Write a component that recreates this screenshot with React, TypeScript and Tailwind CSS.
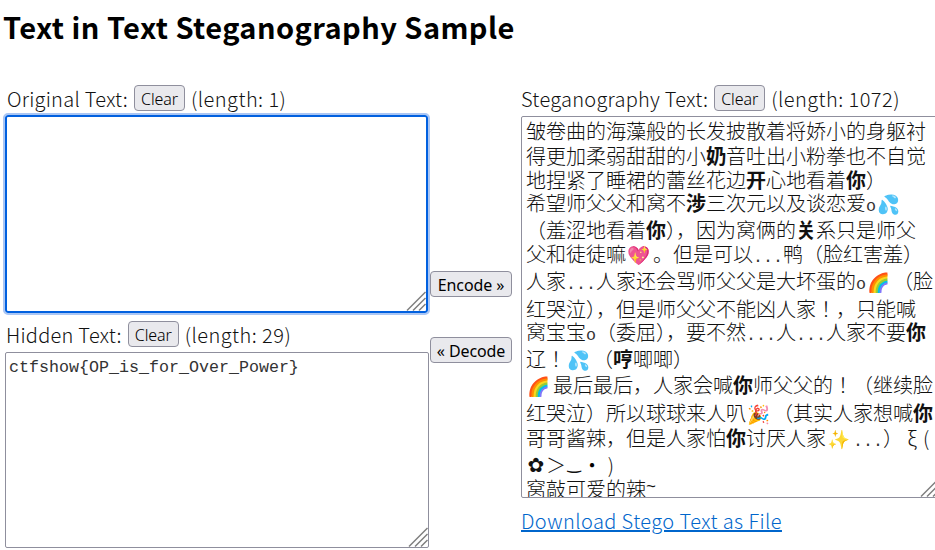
import React from "react";

const jp = "font-['Noto_Sans_CJK_JP','Noto_Sans_CJK_SC',sans-serif]";

function Btn({ children, w }: { children: React.ReactNode; w: string }) {
  return (
    <button className={`${w} h-[26px] shrink-0 rounded-[4px] border border-[#8f8f9d] bg-[#e9e9ed] pt-[1px] text-[16px] leading-none text-black font-['Noto_Sans',sans-serif] tracking-[-0.1px]`}>
      {children}
    </button>
  );
}
function Label({ name, len }: { name: string; len: string }) {
  return (
    <div className={`flex items-center h-[26px] text-[20px] leading-none text-[#111] tracking-[0.25px] ${jp} font-light`}>
      <span className="mr-[6px] pt-[2px]">{name}</span>
      <Btn w="w-[51px]">Clear</Btn>
      <span className="ml-[6px] pt-[2px] tracking-[0.45px]">{len}</span>
    </div>
  );
}
function Handle() {
  return (
    <svg className="absolute right-0 bottom-0" width="20" height="20" viewBox="0 0 20 20">
      <g stroke="#7d7d7d" strokeWidth="1.4" fill="none">
        <path d="M1 19.5 L19.5 1" />
        <path d="M7 19.5 L19.5 7" />
        <path d="M13 19.5 L19.5 13" />
      </g>
    </svg>
  );
}

const lines: [string, string][] = [
  ["h-[25px]", "皱卷曲的海藻般的长发披散着将娇小的身躯衬"],
  ["h-[25px]", "得更加柔弱甜甜的小|奶|音吐出小粉拳也不自觉"],
  ["h-[24px]", "地捏紧了睡裙的蕾丝花边|开|心地看着|你|）"],
  ["h-[25px]", "希望师父父和窝不|涉|三次元以及谈恋爱o💦"],
  ["h-[25px]", "（羞涩地看着|你|），因为窝俩的|关|系只是师父"],
  ["h-[27px]", "父和徒徒嘛💖。但是可以...鸭（脸红害羞）"],
  ["h-[27px]", "人家...人家还会骂师父父是大坏蛋的o🌈（脸"],
  ["h-[25px]", "红哭泣），但是师父父不能凶人家！，只能喊"],
  ["h-[25px]", "窝宝宝o（委屈），要不然...人...人家不要|你|"],
  ["h-[25px]", "辽！💦（|哼|唧唧）"],
  ["h-[28px]", "🌈最后最后，人家会喊|你|师父父的！（继续脸"],
  ["h-[27px]", "红哭泣）所以球球来人叭🎉（其实人家想喊|你|"],
  ["h-[28px]", "哥哥酱辣，但是人家怕|你|讨厌人家✨...）ξ("],
];

function Tokens({ text }: { text: string }) {
  const toks = text.split(/(💦|💖|🌈|🎉|✨|\.\.\.|o|~|ξ|\()/u).filter(Boolean);
  return (
    <>
      {toks.map((t, i) => {
        if (/[💦💖🌈🎉✨]/u.test(t))
          return <span key={i} className="inline-block w-[27px] pl-[1px] text-[18.5px] font-normal">{t}</span>;
        if (t === "ξ")
          return <span key={i} className="inline-block w-[18px] text-center">{t}</span>;
        if (t === "(")
          return <span key={i} className="pl-[2px]">{t}</span>;
        if (t === "~")
          return <span key={i} className="font-['Liberation_Mono',monospace] text-[16.67px] align-[5px]">{t}</span>;
        if (/^(\.\.\.|o)$/.test(t))
          return <span key={i} className="font-['Liberation_Mono',monospace] text-[16.67px] text-[#333]">{t}</span>;
        return <span key={i}>{t}</span>;
      })}
    </>
  );
}

function StegoLine({ text, h }: { text: string; h: string }) {
  const parts = text.split("|");
  return (
    <div className={`${h} flex items-center whitespace-pre`}>
      <span>
        {parts.map((p, i) => (i % 2 ? <b key={i} className="font-bold"><Tokens text={p} /></b> : <Tokens key={i} text={p} />))}
      </span>
    </div>
  );
}

export default function App() {
  return (
    <div className="w-[935px] h-[550px] overflow-hidden bg-white">
      <h1 className={`pl-[3px] pt-[8px] h-[79px] text-[29px] leading-[36px] font-bold text-black tracking-[0.45px] ${jp}`}>
        Text in Text Steganography Sample
      </h1>
      <div className="flex pt-[6px] items-start">
        <div className="w-[425px] ml-[5px] shrink-0 flex flex-col">
          <div className="pl-[2px] mb-[4px]"><Label name="Original Text:" len="(length: 1)" /></div>
          <div className="relative w-[423px] h-[198px] bg-white rounded-[3px] border-2 border-[#0060df] outline-2 outline-[#aac6f4]">
            <Handle />
          </div>
          <div className="pl-[1px] mt-[8px] mb-[5px]"><Label name="Hidden Text:" len="(length: 29)" /></div>
          <div className="relative w-[424px] h-[196px] bg-white border border-[#8f8f9d] rounded-[2px] px-[3px] py-[3px] font-['Liberation_Mono',monospace] text-[16.67px] leading-[24px] text-[#333]">
            ctfshow{"{OP_is_for_Over_Power}"}
            <Handle />
          </div>
        </div>
        <div className="w-[82px] shrink-0 flex flex-col pt-[186px]">
          <Btn w="w-[82px]">Encode »</Btn>
          <div className="h-[40px]" />
          <Btn w="w-[82px]">« Decode</Btn>
        </div>
        <div className="ml-[9px] w-[420px] shrink-0 flex flex-col">
          <div className="mb-[5px]"><Label name="Steganography Text:" len="(length: 1072)" /></div>
          <div className={`relative w-[420px] h-[382px] overflow-hidden bg-white border border-[#8f8f9d] rounded-[2px] pl-[4px] pt-[1px] text-[20px] leading-[24px] text-[#111] font-light ${jp}`}>
            {lines.map(([h, t], i) => <StegoLine key={i} h={h} text={t} />)}
            <div className="h-[22px] flex items-center whitespace-pre">
              <span className="inline-block w-[20px] text-center font-['DejaVu_Sans',sans-serif] text-[20px] leading-[22px] font-bold">✿</span>
              <span className="inline-block w-[20px] text-center">＞</span>
              <span className="inline-block w-[16px] text-center font-['DejaVu_Sans',sans-serif] text-[16px] font-bold">‿</span>
              <span className="inline-block w-[20px] text-center font-['DejaVu_Sans',sans-serif] text-[10px] text-black">●</span>
              <span className="inline-block w-[18px] text-center">)</span>
            </div>
            <div className="h-[24px] flex items-center whitespace-pre">
              <span><Tokens text="窝敲可爱的辣~" /></span>
            </div>
            <Handle />
          </div>
          <a className={`mt-[11px] text-[20px] leading-[24px] text-[#0066cc] underline font-light tracking-[0.42px] ${jp}`}>Download Stego Text as File</a>
        </div>
      </div>
    </div>
  );
}
